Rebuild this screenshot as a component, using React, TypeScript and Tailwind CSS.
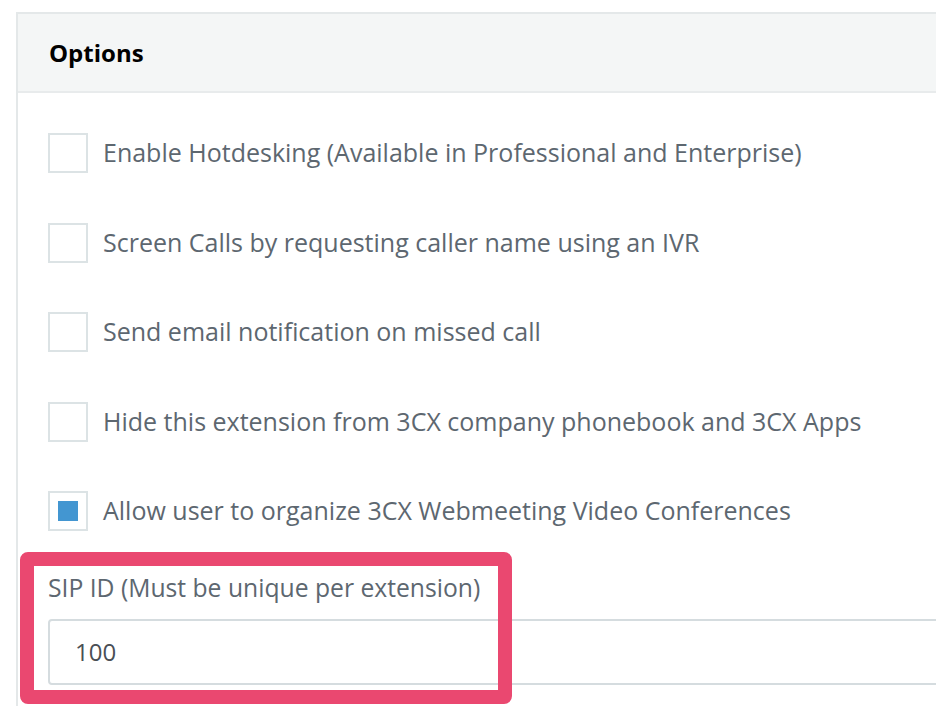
import React from "react";

const options = [
  { label: "Enable Hotdesking (Available in Professional and Enterprise)", checked: false },
  { label: "Screen Calls by requesting caller name using an IVR", checked: false },
  { label: "Send email notification on missed call", checked: false },
  { label: "Hide this extension from 3CX company phonebook and 3CX Apps", checked: false },
  { label: "Allow user to organize 3CX Webmeeting Video Conferences", checked: true },
];

const Checkbox: React.FC<{ checked: boolean }> = ({ checked }) => (
  <div className="w-[40px] h-[40px] shrink-0 border-2 border-[#dce3e5] bg-white flex items-center justify-center">
    {checked && <div className="w-[20px] h-[20px] bg-[#4396d1]" />}
  </div>
);

export default function App() {
  return (
    <div
      className="w-[936px] h-[706px] overflow-hidden bg-white pt-[12px] pl-[16px]"
      style={{ fontFamily: "'Open Sans', Lato, sans-serif" }}
    >
      <div className="w-[1000px] h-[720px] border-l-2 border-t-2 border-[#e4e8e9]">
        {/* Header */}
        <div className="h-[79px] bg-[#f4f6f6] border-b-2 border-[#e8ebec] flex items-center pl-[31px]">
          <h2 className="text-[24px] font-bold text-black">Options</h2>
        </div>

        {/* Checkbox list */}
        <div className="pl-[30px] pt-[40px] flex flex-col gap-[49.5px]">
          {options.map((opt) => (
            <div key={opt.label} className="flex items-center gap-[15px] h-[40px]">
              <Checkbox checked={opt.checked} />
              <span className="text-[25px] text-[#5d6770] whitespace-nowrap">{opt.label}</span>
            </div>
          ))}
        </div>

        {/* SIP ID */}
        <div className="relative ml-[30px] mt-[42px]">
          <div className="h-[30px] flex items-center text-[24.7px] text-[#5d6770] whitespace-nowrap">
            SIP ID (Must be unique per extension)
          </div>
          <div className="mt-[16px] w-[920px] h-[66px] border-2 border-[#d5dcdf] rounded-[4px] flex items-center pl-[25px] text-[24px] text-[#4a4f55]">
            100
          </div>
          {/* annotation */}
          <div className="absolute left-[-28px] top-[-21px] w-[492px] h-[152px] border-[14px] border-[#ea4870] rounded-[8px]" />
        </div>
      </div>
    </div>
  );
}
